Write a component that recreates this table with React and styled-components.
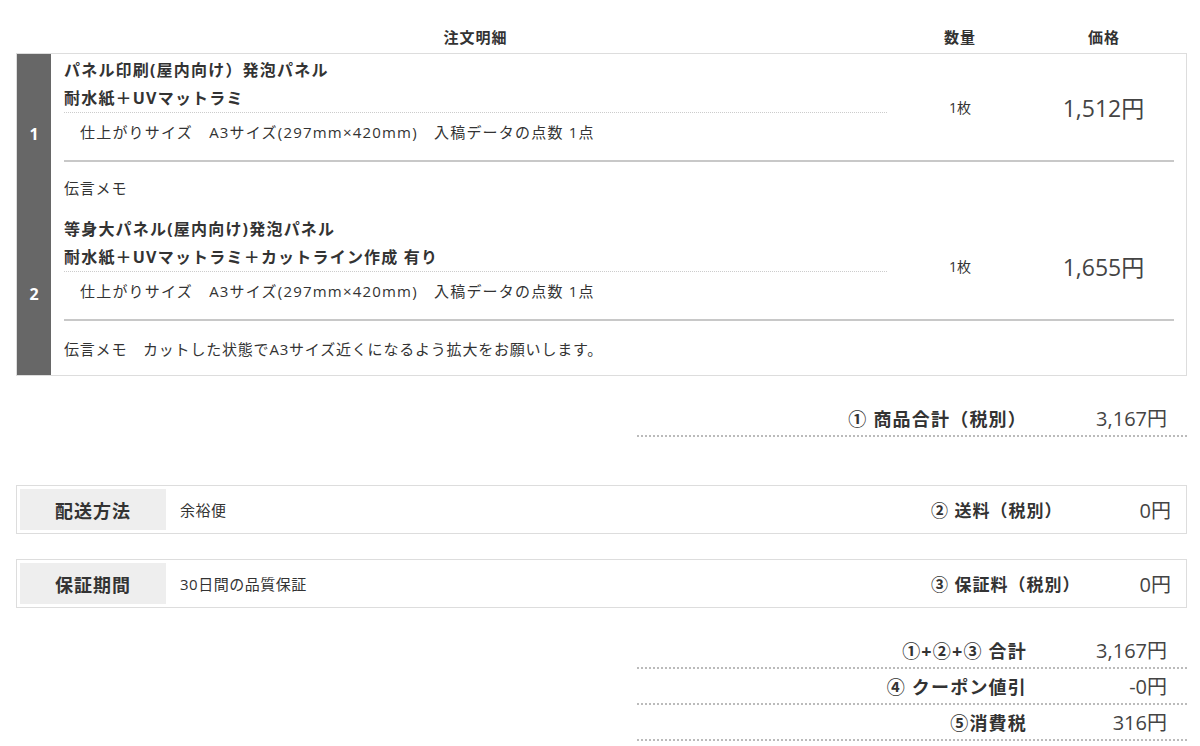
import React from 'react';
import styled, { createGlobalStyle } from 'styled-components';

const GlobalStyle = createGlobalStyle`
  body {
    margin: 0;
    background: #fff;
    color: #333;
    font-family: "Open Sans", "Noto Sans CJK JP", sans-serif;
  }
`

const Page = styled.div`
  width: 1171px;
  padding: 19px 13px 0 16px;
`

const HeadRow = styled.div`
  display: grid;
  grid-template-columns: 823px 146px 1fr;
  padding: 0 12px 0 48px;
  height: 34px;
  align-items: center;
  text-align: center;
  font-weight: bold;
  font-size: 15px;
  letter-spacing: 1px;
`

const Table = styled.div`
  border: 1px solid #ddd;
`

const Item = styled.div`
  display: flex;
`

const Num = styled.div`
  width: 34px;
  flex: none;
  background: #676767;
  color: #fff;
  font-weight: bold;
  font-size: 16px;
  display: flex;
  align-items: center;
  justify-content: center;
`

const ItemBody = styled.div`
  flex: 1;
  padding: 0 12px 0 13px;
`

const Product = styled.div`
  display: grid;
  grid-template-columns: 823px 146px 1fr;
  align-items: center;
  border-bottom: 2px solid #c8c8c8;
`

const Info = styled.div`
  padding: 2px 0 14px;
`

const Title = styled.div`
  font-weight: bold;
  font-size: 16px;
  line-height: 28px;
  letter-spacing: 1.2px;
  border-bottom: 1px dotted #ccc;
`

const Specs = styled.div`
  margin-top: 5px;
  padding-left: 16px;
  font-size: 15px;
  line-height: 28px;
  letter-spacing: 1.2px;
  white-space: pre;
`

const Qty = styled.div`
  text-align: center;
  font-size: 14px;
`

const Price = styled.div`
  text-align: center;
  font-size: 23px;
  color: #444;
`

const Memo = styled.div`
  padding: ${p => (p.$last ? '14px 0 12px' : '12px 0 11px')};
  font-size: 15px;
  line-height: 28px;
  letter-spacing: 0.8px;
  white-space: pre;
`

const SumList = styled.div`
  margin-left: 621px;
  margin-top: ${p => p.$top}px;
`

const SumRow = styled.div`
  display: grid;
  grid-template-columns: 1fr 140px;
  padding: 2px 20px 0 0;
  line-height: 32px;
  border-bottom: 2px dotted #bbb;
`

const SumLabel = styled.div`
  text-align: right;
  font-weight: bold;
  font-size: 18px;
  letter-spacing: 1.2px;
  white-space: pre;
`

const SumValue = styled.div`
  text-align: right;
  font-size: 20px;
  color: #444;
`

const InfoBox = styled.div`
  display: flex;
  align-items: center;
  border: 1px solid #ddd;
  padding: 3px 15px 3px 3px;
  margin-top: ${p => p.$top}px;
`

const BoxLabel = styled.div`
  width: 146px;
  height: 41px;
  flex: none;
  background: #eee;
  display: flex;
  align-items: center;
  justify-content: center;
  font-weight: bold;
  font-size: 18px;
  letter-spacing: 1px;
`

const BoxValue = styled.div`
  flex: 1;
  padding-left: 14px;
  font-size: 15px;
  letter-spacing: 0.5px;
`

const FeeLabel = styled.div`
  width: 160px;
  font-weight: bold;
  font-size: 17px;
  letter-spacing: 1px;
  white-space: pre;
`

const FeeValue = styled.div`
  width: 80px;
  text-align: right;
  font-size: 20px;
  color: #444;
`

const items = [
  {
    no: 1,
    title: ['パネル印刷(屋内向け）発泡パネル', '耐水紙＋UVマットラミ'],
    specs: '仕上がりサイズ　A3サイズ(297mm×420mm)　入稿データの点数 1点',
    qty: '1枚',
    price: '1,512円',
    memo: '伝言メモ',
  },
  {
    no: 2,
    title: ['等身大パネル(屋内向け)発泡パネル', '耐水紙＋UVマットラミ＋カットライン作成 有り'],
    specs: '仕上がりサイズ　A3サイズ(297mm×420mm)　入稿データの点数 1点',
    qty: '1枚',
    price: '1,655円',
    memo: '伝言メモ　カットした状態でA3サイズ近くになるよう拡大をお願いします。',
  },
]

const totals = [
  ['①+②+③ 合計', '3,167円'],
  ['④ クーポン値引', '-0円'],
  ['⑤消費税', '316円'],
]

const App = () => {
  return (
    <Page>
      <GlobalStyle />
      <HeadRow>
        <div>注文明細</div>
        <div>数量</div>
        <div>価格</div>
      </HeadRow>
      <Table>
        {items.map((item, i) => (
          <Item key={item.no}>
            <Num>{item.no}</Num>
            <ItemBody>
              <Product>
                <Info>
                  <Title>
                    {item.title.map(line => <div key={line}>{line}</div>)}
                  </Title>
                  <Specs>{item.specs}</Specs>
                </Info>
                <Qty>{item.qty}</Qty>
                <Price>{item.price}</Price>
              </Product>
              <Memo $last={i === items.length - 1}>{item.memo}</Memo>
            </ItemBody>
          </Item>
        ))}
      </Table>

      <SumList $top={25}>
        <SumRow>
          <SumLabel>① 商品合計（税別）</SumLabel>
          <SumValue>3,167円</SumValue>
        </SumRow>
      </SumList>

      <InfoBox $top={48}>
        <BoxLabel>配送方法</BoxLabel>
        <BoxValue>余裕便</BoxValue>
        <FeeLabel>② 送料（税別）</FeeLabel>
        <FeeValue>0円</FeeValue>
      </InfoBox>

      <InfoBox $top={25}>
        <BoxLabel>保証期間</BoxLabel>
        <BoxValue>30日間の品質保証</BoxValue>
        <FeeLabel>③ 保証料（税別）</FeeLabel>
        <FeeValue>0円</FeeValue>
      </InfoBox>

      <SumList $top={25}>
        {totals.map(([label, value]) => (
          <SumRow key={label}>
            <SumLabel>{label}</SumLabel>
            <SumValue>{value}</SumValue>
          </SumRow>
        ))}
      </SumList>
    </Page>
  )
}

export default App;
